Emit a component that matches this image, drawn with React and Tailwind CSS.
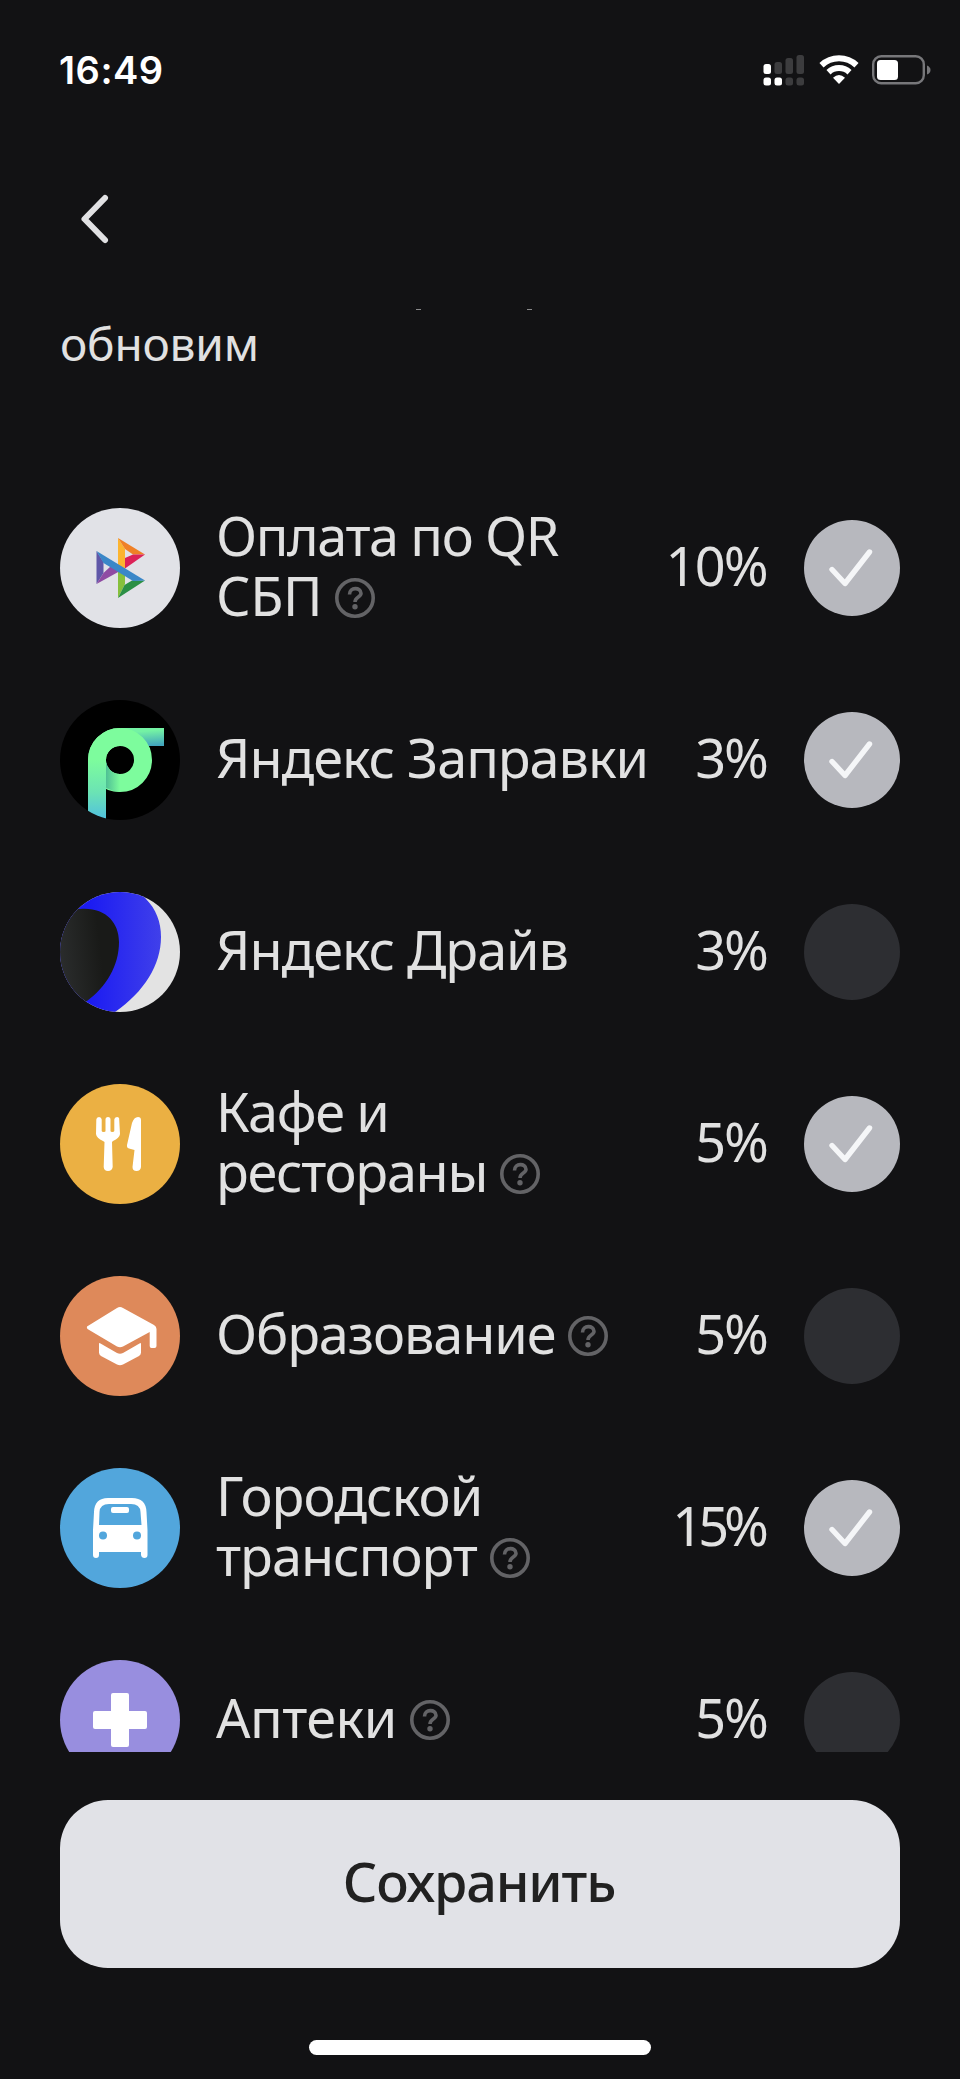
import { useState } from 'react'

function SbpIcon() {
  return (
    <svg viewBox="0 0 120 120" className="block size-full">
      <rect width="120" height="120" fill="#e1e2e7" />
      <path d="M36.500 43L43.500 54V65L36.500 76Z" fill="#5f57a8" />
      <path d="M58 30L65 41V62L58 58Z" fill="#fcb42f" />
      <path d="M58 30L85 46.500L73 46.500L65 41Z" fill="#ef8026" />
      <path d="M85 46.500L65 60.500V50L73 46.500Z" fill="#dc2258" />
      <path d="M36.500 76L60 63L51 58L43.500 65Z" fill="#8f4ba3" />
      <path d="M58 60H65V76L58 90Z" fill="#86c03c" />
      <path d="M58 90L85 72.500H72L64.500 77Z" fill="#2b8f45" />
      <path d="M36.500 43L85 72.500L73 73L43.500 55Z" fill="#3a87c8" />
    </svg>
  )
}

function FuelIcon() {
  return (
    <svg viewBox="0 0 120 120" className="block size-full">
      <defs>
        <linearGradient id="fuelStem" x1="0" y1="0" x2="0" y2="1">
          <stop offset="0.35" stopColor="#7dfc9d" />
          <stop offset="0.7" stopColor="#6be3b4" />
          <stop offset="1" stopColor="#50bfe0" />
        </linearGradient>
        <linearGradient id="fuelTail" x1="0.4" y1="0" x2="0.6" y2="1">
          <stop offset="0.2" stopColor="#74f2a4" />
          <stop offset="1" stopColor="#42a5bd" />
        </linearGradient>
        <linearGradient id="fuelFold" x1="0" y1="0" x2="1" y2="0">
          <stop offset="0" stopColor="#4fbf95" />
          <stop offset="1" stopColor="#7dfc9d" />
        </linearGradient>
      </defs>
      <rect width="120" height="120" fill="#000" />
      <path d="M60 28H104V46H80Z" fill="url(#fuelTail)" />
      <circle cx="60" cy="60" r="23" fill="none" stroke="#7dfc9d" strokeWidth="18" />
      <path d="M46 60A14 14 0 0 0 60 74V92Q52 91 46 88Z" fill="url(#fuelFold)" />
      <path d="M60 28A32 32 0 0 0 28 60V120H46V60A14 14 0 0 1 60 46Z" fill="url(#fuelStem)" />
    </svg>
  )
}

function DriveIcon() {
  return (
    <svg viewBox="0 0 120 120" className="block size-full">
      <defs>
        <linearGradient id="driveBlue" x1="0" y1="0" x2="1" y2="0">
          <stop offset="0.3" stopColor="#1c1cf2" />
          <stop offset="1" stopColor="#4040ea" />
        </linearGradient>
        <linearGradient id="driveDark" x1="0" y1="0.6" x2="1" y2="0.4">
          <stop offset="0" stopColor="#2b2d2d" />
          <stop offset="0.7" stopColor="#191a18" />
        </linearGradient>
      </defs>
      <rect width="120" height="120" fill="#e3e3e3" />
      <path d="M0 0H80L86 7C96 17 101 30 101 45C101 73 84 100 55 120H0Z" fill="url(#driveBlue)" />
      <path d="M0 17H20C45 15 59 30 59 50C59 74 46 95 27 109L0 120Z" fill="url(#driveDark)" />
    </svg>
  )
}

function CafeIcon() {
  return (
    <svg viewBox="0 0 120 120" className="block size-full">
      <rect width="120" height="120" fill="#ebb043" />
      <g fill="#fff">
        <path d="M36.300 35.500Q36.500 33 39 33T41.700 35.500V47Q41.700 48 43.700 48T45.500 47V35.500Q45.500 33 48 33T50.500 35.500V47Q50.500 48 52.300 48T54.300 47V35.500Q54.500 33 57 33T59.200 35.500L60 50Q59.500 54 53 57L52 58L52.700 83Q52 87 48 87T43.700 83L44.500 58L43 57Q36.500 54 36 50Z" />
        <path d="M81 36V83Q80.500 87 76.500 87T72.500 83L74.500 66L69 64.500Q66.700 64 67 61L72 39Q74 33 78 33Q81 33 81 36Z" />
      </g>
    </svg>
  )
}

function EducationIcon() {
  return (
    <svg viewBox="0 0 120 120" className="block size-full">
      <rect width="120" height="120" fill="#de895a" />
      <g fill="#fff">
        <path d="M27 50.500L57 32Q60 30 63 32L94 49Q96.500 50.500 96.500 53V70Q96.500 72 94.500 72H91.500Q89.700 72 89.700 70V56L63 70.500Q60 72 57 70.500L27.500 53Q26.500 51.500 27 50.500Z" />
        <path d="M39 68Q39 66.500 40.500 67.500L57 77Q60 78.500 63 77L79.500 67.500Q81 66.500 81 68V76.500Q81 78.500 79 80L63 88.500Q60 90 57 88.500L41 80Q39 78.500 39 76.500Z" />
      </g>
    </svg>
  )
}

function BusIcon() {
  return (
    <svg viewBox="0 0 120 120" className="block size-full">
      <rect width="120" height="120" fill="#52a6dc" />
      <path d="M48 30H72Q86 30 86.500 44L87.500 62V87Q87.500 90 84.500 90T81 87V84H39V87Q39 90 36 90T33 87V62L34 44Q34.500 30 48 30Z" fill="#fff" />
      <path d="M49 36H71Q80 36 80.500 44L81.500 57H39L39.500 44Q40 36 49 36Z" fill="#52a6dc" />
      <rect x="51" y="39" width="18" height="6" rx="2" fill="#fff" />
      <circle cx="43" cy="67.500" r="4" fill="#52a6dc" />
      <circle cx="77" cy="67.500" r="4" fill="#52a6dc" />
    </svg>
  )
}

function PharmacyIcon() {
  return (
    <svg viewBox="0 0 120 120" className="block size-full">
      <rect width="120" height="120" fill="#988edf" />
      <rect x="51" y="33" width="18" height="54" rx="2" fill="#fff" />
      <rect x="33" y="51" width="54" height="18" rx="2" fill="#fff" />
    </svg>
  )
}

function HelpIcon() {
  return (
    <svg viewBox="0 0 40 40" className="mt-[6px] ml-[13px] size-10 shrink-0" fill="none" stroke="#636366">
      <circle cx="20" cy="20" r="18.200" strokeWidth="3.600" />
      <path d="M14.500 16.500C14.500 8.800 26 9 26 15.300C26 19.500 20 18.500 20 24" strokeWidth="3.600" />
      <circle cx="20" cy="28.700" r="2.700" fill="#636366" stroke="none" />
    </svg>
  )
}

const CATEGORIES = [
  {
    id: 'sbp',
    icon: SbpIcon,
    percent: '10%',
    percentClass: 'mr-[37px] tracking-[-1.7px]',
    lines: [
      { text: 'Оплата по QR', spacing: 'tracking-[-1.4px]' },
      { text: 'СБП', spacing: 'tracking-[-0.3px]' },
    ],
    help: true,
  },
  {
    id: 'fuel',
    icon: FuelIcon,
    percent: '3%',
    percentClass: 'mr-[37px] tracking-[-2px]',
    lines: [{ text: 'Яндекс Заправки', spacing: 'tracking-[-1.05px]' }],
  },
  {
    id: 'drive',
    icon: DriveIcon,
    percent: '3%',
    percentClass: 'mr-[37px] tracking-[-2px]',
    lines: [{ text: 'Яндекс Драйв', spacing: 'tracking-[-1.05px]' }],
  },
  {
    id: 'cafe',
    icon: CafeIcon,
    percent: '5%',
    percentClass: 'mr-[37px] tracking-[-2px]',
    lines: [
      { text: 'Кафе и', spacing: 'tracking-[-1.3px]' },
      { text: 'рестораны', spacing: 'tracking-[-1.3px]' },
    ],
    help: true,
  },
  {
    id: 'education',
    icon: EducationIcon,
    percent: '5%',
    percentClass: 'mr-[37px] tracking-[-2px]',
    lines: [{ text: 'Образование', spacing: 'tracking-[-1.1px]' }],
    help: true,
  },
  {
    id: 'transport',
    icon: BusIcon,
    percent: '15%',
    percentClass: 'mr-[40px] tracking-[-5px]',
    lines: [
      { text: 'Городской', spacing: 'tracking-[-0.9px]' },
      { text: 'транспорт', spacing: 'tracking-[-1px]' },
    ],
    help: true,
  },
  {
    id: 'pharmacy',
    icon: PharmacyIcon,
    percent: '5%',
    percentClass: 'mr-[37px] tracking-[-2px]',
    lines: [{ text: 'Аптеки', spacing: 'tracking-[-0.5px]' }],
    help: true,
  },
]

function StatusBar() {
  return (
    <div className="flex h-[140px] shrink-0 items-start justify-between pt-[48px] pr-[28px] pl-[59px]">
      <span className="font-[Inter,sans-serif] text-[38px] leading-[44px] font-semibold tracking-[0.5px] text-white">
        16:49
      </span>
      <div className="mt-[6px] flex items-start">
        {/* Dual SIM signal */}
        <svg width="42" height="32" viewBox="0 0 42 32" className="mt-px mr-[14px]" fill="#3c3c3e">
          <rect x="0.500" y="9" width="7.500" height="10" rx="2.500" fill="#fff" />
          <rect x="11.500" y="7" width="7.500" height="12" rx="2.500" />
          <rect x="22.500" y="3" width="7.500" height="16" rx="2.500" />
          <rect x="33.500" y="0" width="7.500" height="19" rx="2.500" />
          <rect x="0.500" y="22.500" width="7.500" height="8" rx="2.500" fill="#fff" />
          <rect x="11.500" y="22.500" width="7.500" height="8" rx="2.500" fill="#fff" />
          <rect x="22.500" y="22.500" width="7.500" height="8" rx="2.500" />
          <rect x="33.500" y="22.500" width="7.500" height="8" rx="2.500" />
        </svg>
        {/* Wi-Fi */}
        <svg width="40" height="31" viewBox="0 0 40 31" className="mr-[13px]" fill="none" stroke="#fff" strokeWidth="6">
          <path d="M2.500 11.200A25.500 25.500 0 0 1 37.500 11.200" />
          <path d="M9.500 18.200A15.500 15.500 0 0 1 30.500 18.200" />
          <path d="M20 30L14 23.700Q20 18.500 26 23.700Z" fill="#fff" stroke="none" />
        </svg>
        {/* Battery */}
        <svg width="60" height="32" viewBox="0 0 60 32">
          <rect x="1.200" y="2.200" width="50.600" height="27" rx="8" fill="none" stroke="#77777a" strokeWidth="2.400" />
          <rect x="5" y="6" width="21" height="20" rx="3.500" fill="#fff" />
          <path d="M55 11.500Q58.500 13 58.500 16T55 20.500Z" fill="#77777a" />
        </svg>
      </div>
    </div>
  )
}

function CategoryRow({ category, checked, onToggle }) {
  const Icon = category.icon
  return (
    <div className="flex h-[192px] shrink-0 items-center">
      <div className="size-[120px] shrink-0 overflow-hidden rounded-full">
        <Icon />
      </div>
      <div className="ml-9 flex-1 pb-[7px] text-[54px] leading-[60px] whitespace-nowrap">
        {category.lines.map((line, i) => (
          <div key={line.text} className="flex items-center">
            <span className={line.spacing}>{line.text}</span>
            {category.help && i === category.lines.length - 1 && <HelpIcon />}
          </div>
        ))}
      </div>
      <span className={`pb-[7px] text-[54px] leading-[60px] ${category.percentClass}`}>{category.percent}</span>
      <button
        onClick={onToggle}
        className={`flex size-24 shrink-0 items-center justify-center rounded-full ${
          checked ? 'bg-[#b7b8be]' : 'bg-[#2d2e32]'
        }`}
      >
        {checked && (
          <svg viewBox="0 0 96 96" className="size-24" fill="none" stroke="#f5f6f8" strokeWidth="5.400" strokeLinecap="round" strokeLinejoin="round">
            <path d="M28 49.500L41 63.500L65.500 32" />
          </svg>
        )}
      </button>
    </div>
  )
}

export default function App() {
  const [selected, setSelected] = useState(['sbp', 'fuel', 'cafe', 'transport'])

  const toggle = (id) => {
    setSelected((prev) => (prev.includes(id) ? prev.filter((x) => x !== id) : [...prev, id]))
  }

  return (
    <div className='flex h-[2079px] w-[960px] flex-col overflow-hidden bg-[#121214] font-["Noto_Sans",sans-serif] text-[#e1e1e1]'>
      <StatusBar />

      {/* Header */}
      <div className="flex h-[169px] shrink-0 items-start pl-[60px]">
        <button className="mt-[43px] ml-[12px]">
          <svg width="48" height="72" viewBox="0 0 48 72" fill="none" stroke="#e1e1e3" strokeWidth="6" strokeLinecap="round" strokeLinejoin="round">
            <path d="M33 15L12.500 36L33 57" />
          </svg>
        </button>
      </div>

      {/* Scrolled content */}
      <div className="flex h-[1443px] shrink-0 flex-col overflow-hidden px-[60px]">
        {/* Descender tips of the line scrolled under the header */}
        <div className="flex h-px shrink-0 pl-[356px]">
          <div className="h-px w-[5px] bg-[#8a8a8b]" />
          <div className="ml-[106px] h-px w-[5px] bg-[#8a8a8b]" />
        </div>
        <p className="mt-[5px] h-[157px] shrink-0 text-[46px] leading-[56px] tracking-[-0.2px]">обновим</p>
        {CATEGORIES.map((category) => (
          <CategoryRow
            key={category.id}
            category={category}
            checked={selected.includes(category.id)}
            onToggle={() => toggle(category.id)}
          />
        ))}
      </div>

      {/* Footer */}
      <div className="flex flex-1 flex-col items-center px-[60px] pt-12">
        <button className="h-[168px] w-full rounded-[48px] bg-[#e1e2e7] pr-[2px] pb-[6px] text-[54px] font-medium tracking-[-1.15px] text-[#212121]">
          Сохранить
        </button>
        <div className="mt-[72px] h-[15px] w-[342px] rounded-full bg-white" />
      </div>
    </div>
  )
}
